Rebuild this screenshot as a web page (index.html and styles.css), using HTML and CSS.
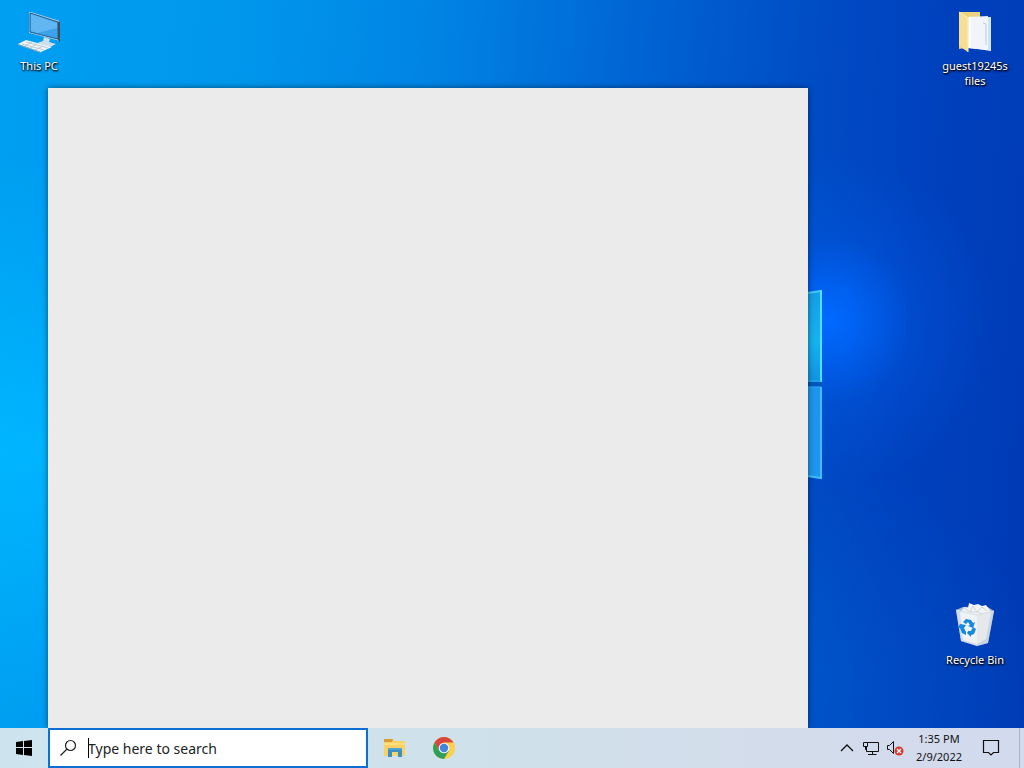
FILE: index.html
```html
<!DOCTYPE html>
<html lang="en">
<head>
  <meta charset="UTF-8">
  <meta name="viewport" content="width=device-width, initial-scale=1">
  <title>Desktop</title>
  <link rel="stylesheet" href="styles.css">
</head>
<body>
  <main class="desktop">
    <svg class="wallpaper-logo" width="20" height="200" viewBox="0 0 20 200" aria-hidden="true">
      <defs>
        <linearGradient id="paneTop" x1="0" y1="0" x2="0" y2="1">
          <stop offset="0" stop-color="#159fe8"/>
          <stop offset=".55" stop-color="#16b2f0"/>
          <stop offset="1" stop-color="#1293e2"/>
        </linearGradient>
      </defs>
      <path d="M0 7 14 5V96H0Z" fill="url(#paneTop)"/>
      <path d="M0 101H14V192L0 190Z" fill="#1e95ee"/>
      <path d="M0 7 14 5" stroke="#45c9f5" stroke-width="2"/>
      <path d="M14 4V96" stroke="#4be4fa" stroke-width="2"/>
      <path d="M0 95H14M0 101H14" stroke="#33aef0"/>
      <path d="M0 98H15" stroke="#0758b4" stroke-width="3"/>
      <path d="M14 101V192L0 190" fill="none" stroke="#42bdf8" stroke-width="2"/>
    </svg>

    <a class="shortcut this-pc" href="#">
      <svg width="48" height="48" viewBox="0 0 48 48" aria-hidden="true">
        <path d="M14 4 16 4 45 13V33L14 25Z" fill="#a9cde2"/>
        <path d="M15 5 43 14V31L15 24Z" fill="#3ea2ea" stroke="#1f5f93"/>
        <path d="M16 6 42 15V20L22 25 16 23Z" fill="#72c0f6" opacity=".7"/>
        <path d="M43 14 45 13V34L43 32Z" fill="#424f59"/>
        <path d="M29 29 35 31 34 34 41 36 35 39 22 35 28 33Z" fill="#cfdfe9"/>
        <path d="M3 36 11 32 37 39 26 44Z" fill="#eef4f7"/>
        <path d="M3 36 26 44V45L3 37Z" fill="#8fabba"/>
        <path d="M7 36 29 42M11 34 33 40M10 38 17 34M15 40 22 36M20 42 28 38" stroke="#bccbd4" fill="none"/>
      </svg>
      <span>This PC</span>
    </a>

    <a class="shortcut guest-files" href="#">
      <svg width="48" height="48" viewBox="0 0 48 48" aria-hidden="true">
        <path d="M8 4H29V40H14L8 41Z" fill="#ecd27c"/>
        <path d="M15 9 37 8V42L16 40Z" fill="#e5edf3"/>
        <path d="M18 9 35 10V41L17 40Z" fill="#fafcfe"/>
        <path d="M20 10 40 9V43L20 40Z" fill="#f1f5fa"/>
        <path d="M37 9 40 9V43L37 42Z" fill="#cfe3f4"/>
        <path d="M32 15 35 16V37" fill="none" stroke="#bccbd8"/>
        <path d="M8 4 17 10V44L8 38Z" fill="#f6df92"/>
        <path d="M8 4 17 10V44" fill="none" stroke="#fbeeb8"/>
      </svg>
      <span>guest19245s files</span>
    </a>

    <a class="shortcut recycle-bin" href="#">
      <svg width="48" height="48" viewBox="0 0 48 48" aria-hidden="true">
        <path d="M5 8 12 5 35 4 43 9 37 41 26 44 10 39Z" fill="#c5d4e2" opacity=".85"/>
        <path d="M9 11 13 5 17 6 18 1 23 3 27 2 31 4 35 3 40 10 35 37 26 42 12 38Z" fill="#f1f3f4"/>
        <path d="M13 6 19 10 22 4 26 10 31 5 36 9M19 10 26 10 32 12" fill="none" stroke="#cfd6db"/>
        <path d="M5 8 26 13 26 44 10 39Z" fill="#edf2f6" opacity=".6"/>
        <path d="M26 13 43 9 37 41 26 44Z" fill="#dfe3e7" opacity=".65"/>
        <path d="M5 8 26 13 43 9" fill="none" stroke="#d3dfe8"/>
        <g fill="#1688da">
          <path d="M12 20 15 17 20 18 22 21 24 20 22 26 17 24 19 23 17 20 15 22Z"/>
          <path d="M9 22 15 23 13 26 15 30 15 33 11 31 9 26 7 26Z"/>
          <path d="M17 29 20 29 22 25 25 27 23 32 20 33V35L16 31 18 28Z"/>
        </g>
      </svg>
      <span>Recycle Bin</span>
    </a>

    <section class="search-panel" aria-label="Search"></section>
  </main>

  <footer class="taskbar">
    <button class="task-btn start" type="button" aria-label="Start">
      <svg width="16" height="16" viewBox="0 0 16 16" aria-hidden="true">
        <path d="M0 2 7 1V7H0ZM8 1 16 0V7H8ZM0 8H7V15L0 14ZM8 8H16V16L8 15Z" fill="#000"/>
      </svg>
    </button>
    <form class="search">
      <label for="search" aria-label="Search">
        <svg width="18" height="18" viewBox="0 0 18 18" fill="none" stroke="#222" stroke-width="1.2" aria-hidden="true">
          <circle cx="10.5" cy="6.5" r="5"/>
          <path d="M7 10 0.5 16.5"/>
        </svg>
      </label>
      <input id="search" type="text" placeholder="Type here to search" autocomplete="off">
    </form>
    <nav class="pinned" aria-label="Pinned apps">
      <button class="task-btn" type="button" aria-label="File Explorer">
        <svg width="24" height="24" viewBox="0 0 24 24" aria-hidden="true">
          <path d="M2 3H11L12 5H23V20H2Z" fill="#f8d264"/>
          <path d="M2 3H11L10 6H2Z" fill="#d99a2e"/>
          <path d="M2 7H23V9H2Z" fill="#ffdf7c"/>
          <path d="M6 12H20V21H16V16H10V21H6Z" fill="#3b8fc2"/>
          <path d="M6 12H20V14H6Z" fill="#4fa3d0"/>
          <path d="M10 16H16V20H10Z" fill="#f6d56c"/>
        </svg>
      </button>
      <button class="task-btn" type="button" aria-label="Google Chrome">
        <svg width="24" height="24" viewBox="0 0 24 24" aria-hidden="true">
          <circle cx="12" cy="12" r="11" fill="#fcd04c"/>
          <path d="M2.5 6.5A11 11 0 0 1 21.5 6.5H12L7 14.5Z" fill="#d9463b"/>
          <path d="M2.5 6.5A11 11 0 0 0 12 23L17 14.5 12 17 7 14.5Z" fill="#2f9e58"/>
          <circle cx="12" cy="12" r="5.3" fill="#f2f5f8"/>
          <circle cx="12" cy="12" r="4.2" fill="#4285e0"/>
        </svg>
      </button>
    </nav>

    <div class="tray">
      <button class="tray-btn" type="button" aria-label="Show hidden icons">
        <svg width="16" height="20" viewBox="0 0 16 20" aria-hidden="true">
          <path d="M2 13 8 7 14 13" fill="none" stroke="#111" stroke-width="1.3"/>
        </svg>
      </button>
      <button class="tray-btn" type="button" aria-label="Network">
        <svg width="18" height="20" viewBox="0 0 18 20" fill="none" stroke="#111" aria-hidden="true">
          <path d="M5.5 4.5H16.5V13.5H4.5V8.5M10.5 13.5V16.5M6 16.5H14.5M1.5 4.5H5.5V8.5H1.5ZM3.5 8.5V11.5H4.5"/>
        </svg>
      </button>
      <button class="tray-btn" type="button" aria-label="Volume muted">
        <svg width="18" height="20" viewBox="0 0 18 20" aria-hidden="true">
          <path d="M1.5 7.5H3.5L7.5 3.5V15.5L3.5 11.5H1.5Z" fill="none" stroke="#111"/>
          <circle cx="13" cy="13" r="4.5" fill="#d63a35"/>
          <path d="M11 11 15 15M15 11 11 15" stroke="#fff" stroke-width="1.3"/>
        </svg>
      </button>
      <button class="clock" type="button"><span>1:35 PM</span><span>2/9/2022</span></button>
      <button class="task-btn notifications" type="button" aria-label="Notifications">
        <svg width="18" height="18" viewBox="0 0 18 18" aria-hidden="true">
          <path d="M1.5 1.5H16.5V13.5H11.5L9 16 6.5 13.5H1.5Z" fill="none" stroke="#111" stroke-width="1.2"/>
        </svg>
      </button>
      <button class="show-desktop" type="button" aria-label="Show desktop"></button>
    </div>
  </footer>
</body>
</html>
```

FILE: styles.css
```css
* {
  box-sizing: border-box;
}
body {
  margin: 0;
  height: 100vh;
  display: flex;
  flex-direction: column;
  overflow: hidden;
  font-family: "Noto Sans", "Open Sans", sans-serif;
  font-size: 11px;
  color: #111;
}
button {
  border: 0;
  padding: 0;
  background: none;
  font: inherit;
  color: inherit;
}
svg {
  display: block;
}
.desktop {
  flex: 1;
  position: relative;
  background:
    radial-gradient(circle at 81% 44%, #006aff 0, rgba(0, 104, 255, 0.7) 4%, rgba(0, 96, 240, 0.3) 9%, transparent 18%),
    radial-gradient(ellipse at 0 62%, rgba(0, 184, 255, 0.9), transparent 45%),
    radial-gradient(ellipse at 76% 95%, rgba(0, 100, 208, 0.5), transparent 24%),
    linear-gradient(95deg, #009ff2 0%, #0097ed 22%, #0084e4 40%, #0066d4 58%, #004ec6 74%, #0041be 86%, #003ab4 100%);
}
.wallpaper-logo {
  position: absolute;
  left: 807px;
  top: 286px;
}
.shortcut {
  position: absolute;
  width: 76px;
  display: flex;
  flex-direction: column;
  align-items: center;
  color: #fff;
  text-align: center;
  text-decoration: none;
  line-height: 15px;
  text-shadow: 0 1px 2px #000, 1px 1px 2px #000;
}
.shortcut svg {
  margin-bottom: 2px;
}
.this-pc {
  left: 1px;
  top: 8px;
}
.guest-files {
  right: 11px;
  top: 8px;
}
.recycle-bin {
  right: 11px;
  bottom: 61px;
}
.search-panel {
  position: absolute;
  left: 48px;
  top: 88px;
  bottom: 0;
  width: 760px;
  max-width: calc(100% - 48px);
  background: #ebebeb;
  box-shadow: 0 0 6px rgba(0, 0, 0, 0.5);
}

/* taskbar */
.taskbar {
  position: relative;
  height: 40px;
  display: flex;
  background: linear-gradient(90deg, #cde4ef, #cfe1eb 45%, #d3dcea 75%, #d2daee);
}
.task-btn {
  width: 48px;
  display: flex;
  align-items: center;
  justify-content: center;
}
.search {
  flex: 0 1 320px;
  display: flex;
  align-items: center;
  border: 2px solid #0b70cf;
  background: #fff;
  padding-left: 10px;
}
.search label {
  width: 28px;
}
.search input {
  flex: 1;
  min-width: 0;
  height: 20px;
  border: 0;
  outline: 0;
  padding: 0;
  font: inherit;
  font-size: 14px;
  /* text cursor at the start of the field */
  background: linear-gradient(#000, #000) no-repeat left / 1px 100%;
}
.search input::placeholder {
  color: #222;
  opacity: 1;
}
.pinned {
  display: flex;
  gap: 2px;
  padding-left: 2px;
}
.tray {
  display: flex;
  margin-left: auto;
}
.tray-btn {
  width: 24px;
  display: flex;
  align-items: center;
  justify-content: center;
}
.clock {
  width: 64px;
  display: flex;
  flex-direction: column;
  justify-content: center;
  align-items: center;
  line-height: 18px;
}
.notifications {
  width: 40px;
  margin-right: 8px;
}
.show-desktop {
  width: 5px;
  border-left: 1px solid #a9b4c4;
}
```
